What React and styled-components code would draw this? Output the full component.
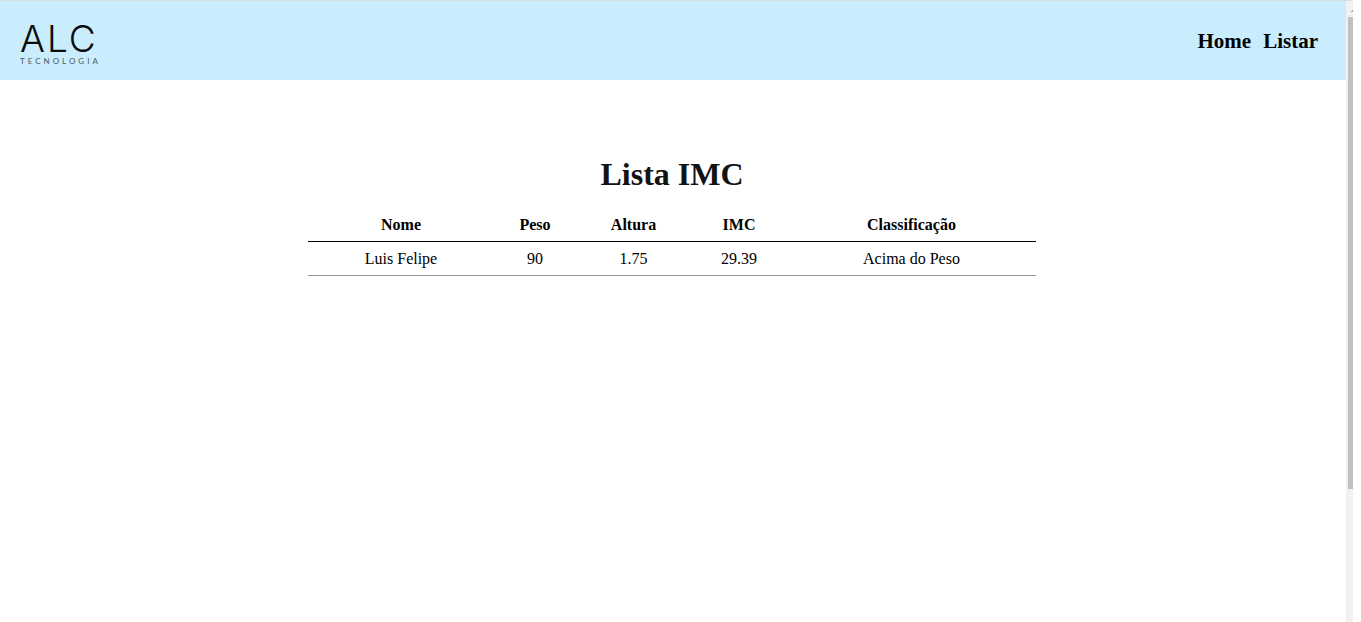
import React from "react";
import styled, { createGlobalStyle } from "styled-components";

const GlobalStyle = createGlobalStyle`
  * { box-sizing: border-box; }
  body {
    margin: 0;
    background: #fff;
    color: #000;
    font-family: "Liberation Serif", "Times New Roman", serif;
    font-size: 16px;
  }
`;

const Window = styled.div`
  display: flex;
  min-height: 100vh;
  padding-right: 8px;
`;

const Page = styled.div`
  flex: 1;
  min-width: 0;
  border-top: 1px solid #dadce0;
`;

const Header = styled.header`
  display: flex;
  align-items: center;
  justify-content: space-between;
  height: 79px;
  padding: 0 28px 0 20px;
  background: #c9edfd;
`;

const Logo = styled.a`
  display: flex;
  flex-direction: column;
  padding-top: 8px;
  font-family: Inter, sans-serif;
  text-decoration: none;
`;

const LogoName = styled.span`
  color: #0c0c0c;
  font-size: 37px;
  font-weight: 300;
  line-height: 32px;
  letter-spacing: 2px;
`;

const LogoCaption = styled.span`
  color: #4c5a60;
  font-family: Lato, sans-serif;
  font-size: 8px;
  line-height: 12px;
  letter-spacing: 3px;
`;

const Nav = styled.nav`
  display: flex;
  gap: 12px;
`;

const NavLink = styled.a`
  color: #000;
  font-size: 21px;
  font-weight: bold;
  line-height: 24px;
  text-decoration: none;
`;

const Main = styled.main`
  display: flex;
  flex-direction: column;
  align-items: center;
  padding: 76px 18px 32px 16px;
`;

const Title = styled.h1`
  margin: 0 0 16px;
  color: #131313;
  font-size: 32px;
  line-height: 36px;
`;

const Table = styled.table`
  width: 100%;
  max-width: 728px;
  table-layout: fixed;
  border-spacing: 0;
  text-align: center;
`;

const Column = styled.col`
  width: ${({ $width }) => ($width ? `${$width}px` : "auto")};
`;

const HeadCell = styled.th`
  padding: 8px 0;
  border-bottom: 1px solid #000;
  line-height: 17px;
`;

const Cell = styled.td`
  padding: 8px 0;
  border-bottom: 1px solid #999;
  line-height: 17px;
`;

const ScrollTrack = styled.div`
  display: flex;
  flex-direction: column;
  align-items: flex-end;
  width: 7px;
  height: 100vh;
  border-top: 1px solid #dadce0;
  background: #f1f1f1;
`;

const ScrollArrow = styled.svg`
  display: block;
  width: 5px;
  height: 16px;
`;

const ScrollThumb = styled.div`
  width: 5px;
  height: 76%;
  background: #c1c1c1;
`;

const columns = [
  { key: "nome", label: "Nome", width: 186 },
  { key: "peso", label: "Peso", width: 82 },
  { key: "altura", label: "Altura", width: 115 },
  { key: "imc", label: "IMC", width: 96 },
  { key: "classificacao", label: "Classificação" },
];

const people = [
  { nome: "Luis Felipe", peso: "90", altura: "1.75", imc: "29.39", classificacao: "Acima do Peso" },
];

export default function App() {
  return (
    <>
      <GlobalStyle />
      <Window>
        <Page>
          <Header>
            <Logo href="#home">
              <LogoName>ALC</LogoName>
              <LogoCaption>TECNOLOGIA</LogoCaption>
            </Logo>
            <Nav>
              <NavLink href="#home">Home</NavLink>
              <NavLink href="#listar">Listar</NavLink>
            </Nav>
          </Header>
          <Main>
            <Title>Lista IMC</Title>
            <Table>
              <colgroup>
                {columns.map((c) => <Column key={c.key} $width={c.width} />)}
              </colgroup>
              <thead>
                <tr>
                  {columns.map((c) => <HeadCell key={c.key} scope="col">{c.label}</HeadCell>)}
                </tr>
              </thead>
              <tbody>
                {people.map((p) => (
                  <tr key={p.nome}>
                    {columns.map((c) => <Cell key={c.key}>{p[c.key]}</Cell>)}
                  </tr>
                ))}
              </tbody>
            </Table>
          </Main>
        </Page>
        <ScrollTrack aria-hidden="true">
          <ScrollArrow viewBox="0 0 5 16">
            <path d="M3 11V10H4V9H5V11Z" fill="#a3a3a3" />
          </ScrollArrow>
          <ScrollThumb />
        </ScrollTrack>
      </Window>
    </>
  );
}
